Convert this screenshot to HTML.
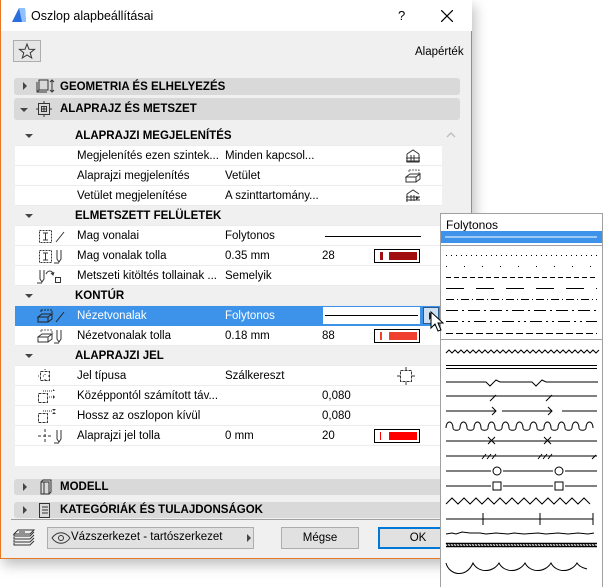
<!DOCTYPE html>
<html><head><meta charset="utf-8"><style>
*{margin:0;padding:0;box-sizing:border-box}
body{width:604px;height:587px;background:#fff;position:relative;overflow:hidden;font-family:"Liberation Sans",sans-serif;font-size:11.5px;color:#000}
.a{position:absolute}
#dlg{left:0;top:0;width:472px;height:559px;background:#f0f0f0;border:1px solid #e87722;border-top:none;box-shadow:3px 6px 12px rgba(0,0,0,.25)}
.bar{position:absolute;left:13px;width:446px;background:#d9d9d9;border-radius:3px;font-weight:bold;font-size:11.5px}
.row{position:absolute;left:14px;width:427px;height:20px;background:#fff;border-bottom:1px solid #ececec;line-height:21px}
.sub{background:#f0f0f0;font-weight:bold}
.t{position:absolute;white-space:nowrap}
.tri{position:absolute;left:10px;top:8px;width:0;height:0;border-left:4px solid transparent;border-right:4px solid transparent;border-top:4px solid #444}
.tr{position:absolute;width:0;height:0;border-top:4px solid transparent;border-bottom:4px solid transparent;border-left:4px solid #444}
.sw{position:absolute;left:359px;top:3px;width:46px;height:14px;border:1px solid #000;background:#fff}
.sw i{position:absolute;top:2px;height:8px}
.ic{position:absolute;left:22px;top:2px}
</style></head><body>
<div id="dlg" class="a">
 <div class="a" style="left:0;top:0;width:471px;height:31px;background:#fff"></div>
 <svg class="a" style="left:10px;top:7px" width="16" height="16"><path d="M1 15 L8 1 L14 1 L15 15Z" fill="#2a6fdb"/><path d="M8 1 L14 1 L15 15 L11 15Z" fill="#8fc0ff"/></svg>
 <div class="t" style="left:30px;top:9px;font-size:12.5px">Oszlop alapbeállításai</div>
 <div class="t" style="left:397px;top:8px;font-size:13px">?</div>
 <svg class="a" style="left:440px;top:10px" width="12" height="12"><path d="M0 0L12 12M12 0L0 12" stroke="#000" stroke-width="1.2"/></svg>
 <div class="a" style="left:12px;top:40px;width:28px;height:22px;border:1px solid #adadad;background:#e6e6e6"></div>
 <svg class="a" style="left:17px;top:42px" width="18" height="18"><path d="M9 2 L11 7.3 L16.5 7.4 L12.2 10.8 L13.7 16 L9 13 L4.3 16 L5.8 10.8 L1.5 7.4 L7 7.3Z" fill="none" stroke="#333" stroke-width="1"/></svg>
 <div class="t" style="left:414px;top:46px">Alapérték</div>

 <div class="bar" style="top:78px;height:17px"><div class="tr" style="left:9px;top:4px"></div>
  <svg class="a" style="left:22px;top:0" width="22" height="17"><rect x="3" y="2" width="9" height="10" fill="none" stroke="#333"/><path d="M1 4v10h10M3 12l-2 2M16 2v12M14 4l2-2 2 2M14 12l2 2 2-2" fill="none" stroke="#333"/></svg>
  <div class="t" style="left:46px;top:3px">GEOMETRIA ÉS ELHELYEZÉS</div></div>
 <div class="bar" style="top:98px;height:22px"><div class="tri" style="left:6px;top:10px"></div>
  <svg class="a" style="left:22px;top:3px" width="16" height="16"><rect x="2.5" y="2.5" width="11" height="11" fill="none" stroke="#333"/><rect x="5.5" y="5.5" width="5" height="5" fill="none" stroke="#333"/><path d="M8 6v4M6 8h4M8 0v2M8 14v2M0 8h2M14 8h2" stroke="#333"/></svg>
  <div class="t" style="left:46px;top:5px">ALAPRAJZ ÉS METSZET</div></div>

 <div class="a" style="left:441px;top:126px;width:18px;height:340px;background:#f0f0f0"></div>
 <svg class="a" style="left:445px;top:132px" width="10" height="6"><path d="M1 5L5 1L9 5" fill="none" stroke="#c0c0c0" stroke-width="1.5"/></svg>
 <div class="a" style="left:14px;top:126px;width:427px;height:340px;background:#fff"></div>

 <div class="row sub" style="top:126px"><div class="tri"></div><div class="t" style="left:60px">ALAPRAJZI MEGJELENÍTÉS</div></div>
 <div class="row" style="top:146px"><div class="t" style="left:62px">Megjelenítés ezen szintek...</div><div class="t" style="left:210px">Minden kapcsol...</div>
  <svg class="a" style="left:390px;top:2px" width="16" height="16"><path d="M2 6L8 2L14 6M2 6v8h12V6M1 10h14M1 13h14M6 7v6M9 7v6" fill="none" stroke="#333"/></svg></div>
 <div class="row" style="top:166px"><div class="t" style="left:62px">Alaprajzi megjelenítés</div><div class="t" style="left:210px">Vetület</div>
  <svg class="a" style="left:390px;top:2px" width="16" height="16"><path d="M4 2h10v5M4 2v3" fill="none" stroke="#666" stroke-dasharray="2 1"/><path d="M1 9l4-3h10l-4 3zM1 9v5h10V9M11 14l4-3V6" fill="none" stroke="#333"/></svg></div>
 <div class="row" style="top:186px"><div class="t" style="left:62px">Vetület megjelenítése</div><div class="t" style="left:210px">A szinttartomány...</div>
  <svg class="a" style="left:390px;top:2px" width="16" height="16"><path d="M2 6L8 2L14 6M2 6v8M1 9h14M1 12h14M6 7v6M9 7v6" fill="none" stroke="#333"/><path d="M11 8l3 2-3 2z" fill="#333"/></svg></div>

 <div class="row sub" style="top:206px"><div class="tri"></div><div class="t" style="left:60px">ELMETSZETT FELÜLETEK</div></div>
 <div class="row" style="top:226px"><svg class="ic" width="30" height="16"><rect x="2.5" y="2.5" width="12" height="12" fill="none" stroke="#333" stroke-dasharray="2 1"/><path d="M6 5h5M6 12h5M8.5 5v7M19 14l8-10" fill="none" stroke="#333"/></svg><div class="t" style="left:62px">Mag vonalai</div><div class="t" style="left:210px">Folytonos</div><div class="a" style="left:310px;top:10px;width:96px;height:1px;background:#000"></div></div>
 <div class="row" style="top:246px"><svg class="ic" width="30" height="16"><rect x="2.5" y="2.5" width="12" height="12" fill="none" stroke="#333" stroke-dasharray="2 1"/><path d="M6 5h5M6 12h5M8.5 5v7M20 2v9l2 3 2-3V2M17 15h5" fill="none" stroke="#333"/></svg><div class="t" style="left:62px">Mag vonalak tolla</div><div class="t" style="left:210px">0.35 mm</div><div class="t" style="left:307px">28</div><div class="sw"><i style="left:5px;width:3px;background:#a01010"></i><i style="left:14px;width:28px;background:#a01010"></i></div></div>
 <div class="row" style="top:266px"><svg class="ic" width="30" height="16"><path d="M3 2v9l2 3 2-3V2M0 15h5M9 6c2-4 6-4 7 0M14 5l2 2 1-3" fill="none" stroke="#333"/><rect x="18.5" y="9.5" width="5" height="5" fill="none" stroke="#333"/></svg><div class="t" style="left:62px">Metszeti kitöltés tollainak ...</div><div class="t" style="left:210px">Semelyik</div></div>

 <div class="row sub" style="top:286px"><div class="tri"></div><div class="t" style="left:60px">KONTÚR</div></div>
 <div class="row" style="top:306px;background:#3d93ea;color:#fff;border-bottom:none;height:20px"><svg class="ic" width="30" height="16"><path d="M4 2h11v5M4 2v3" fill="none" stroke="#222" stroke-dasharray="2 1"/><path d="M1 9l4-3h10l-4 3zM1 9v5h10V9M11 14l4-3V6M19 14l8-10" fill="none" stroke="#222"/></svg><div class="t" style="left:62px">Nézetvonalak</div><div class="t" style="left:210px">Folytonos</div>
  <div class="a" style="left:308px;top:1px;width:97px;height:17px;background:#fff"><div class="a" style="left:2px;top:8px;width:93px;height:1px;background:#000"></div></div>
  <div class="a" style="left:408px;top:1px;width:16px;height:17px;background:#cfe0f2;border:1px solid #2a5a8a"></div><div class="tr" style="left:414px;top:6px;border-left-color:#222"></div></div>
 <div class="row" style="top:326px"><svg class="ic" width="30" height="16"><path d="M4 2h11v5M4 2v3M1 9v5" fill="none" stroke="#666" stroke-dasharray="2 1"/><path d="M1 9l4-3h10l-4 3zM1 11v3h10V9M11 14l4-3V6M20 2v9l2 3 2-3V2M17 15h5" fill="none" stroke="#333"/></svg><div class="t" style="left:62px">Nézetvonalak tolla</div><div class="t" style="left:210px">0.18 mm</div><div class="t" style="left:307px">88</div><div class="sw"><i style="left:5px;width:2px;background:#f04030"></i><i style="left:14px;width:28px;background:#f04030"></i></div></div>

 <div class="row sub" style="top:346px"><div class="tri"></div><div class="t" style="left:60px">ALAPRAJZI JEL</div></div>
 <div class="row" style="top:366px"><svg class="ic" width="30" height="16"><rect x="3.5" y="3.5" width="9" height="9" fill="none" stroke="#333" stroke-dasharray="3 1"/><path d="M8 1v14M1 8h14" stroke="#333" stroke-dasharray="1 4"/></svg><div class="t" style="left:62px">Jel típusa</div><div class="t" style="left:210px">Szálkereszt</div><svg class="a" style="left:382px;top:1px" width="18" height="18"><rect x="3.5" y="3.5" width="11" height="11" fill="none" stroke="#333" stroke-dasharray="3 1"/><path d="M9 0v3M9 15v3M0 9h3M15 9h3" stroke="#333"/></svg></div>
 <div class="row" style="top:386px"><svg class="ic" width="30" height="16"><rect x="1.5" y="5.5" width="9" height="9" fill="none" stroke="#333" stroke-dasharray="3 1"/><path d="M6 3h10M12 9h6" stroke="#333" stroke-dasharray="1 1"/><path d="M16 1l2 2-2 0zM16 7l2 2-2 2z" fill="#333"/></svg><div class="t" style="left:62px">Középpontól számított táv...</div><div class="t" style="left:307px">0,080</div></div>
 <div class="row" style="top:406px"><svg class="ic" width="30" height="16"><rect x="1.5" y="5.5" width="9" height="9" fill="none" stroke="#333" stroke-dasharray="3 1"/><path d="M6 3h10" stroke="#333" stroke-dasharray="1 1"/><path d="M15 1h4l-2 2zM15 6h4l-2-2z" fill="#333"/></svg><div class="t" style="left:62px">Hossz az oszlopon kívül</div><div class="t" style="left:307px">0,080</div></div>
 <div class="row" style="top:426px"><svg class="ic" width="30" height="16"><path d="M8 1v14M1 8h14" stroke="#333" stroke-dasharray="3 2"/><path d="M20 2v9l2 3 2-3V2M17 15h5" fill="none" stroke="#333"/></svg><div class="t" style="left:62px">Alaprajzi jel tolla</div><div class="t" style="left:210px">0 mm</div><div class="t" style="left:307px">20</div><div class="sw"><i style="left:5px;width:1px;background:#f00"></i><i style="left:14px;width:28px;background:#f00"></i></div></div>

 <div class="bar" style="top:479px;height:16px"><div class="tr" style="left:9px;top:4px"></div>
  <svg class="a" style="left:24px;top:0" width="14" height="16"><path d="M3 3h8v12H3zM3 3l2-2h8v12l-2 2M6 3v12" fill="none" stroke="#333"/></svg>
  <div class="t" style="left:46px;top:2px">MODELL</div></div>
 <div class="bar" style="top:502px;height:16px"><div class="tr" style="left:9px;top:4px"></div>
  <svg class="a" style="left:24px;top:1px" width="14" height="15"><path d="M1.5 .5h10v14h-10zM4 4h6M4 7h6M4 10h6" fill="none" stroke="#333"/></svg>
  <div class="t" style="left:46px;top:2px">KATEGÓRIÁK ÉS TULAJDONSÁGOK</div></div>
 <div class="a" style="left:10px;top:519px;width:452px;height:1px;background:#a0a0a0"></div>

 <svg class="a" style="left:10px;top:528px" width="26" height="20"><path d="M7 2h16l-4 4H3zM3 6v2h16l4-4M3 9v2h16l4-4M3 12v2h16l4-4M3 15v2h16l4-4" fill="none" stroke="#333"/><path d="M8 4h6" stroke="#333"/></svg>
 <div class="a" style="left:46px;top:527px;width:207px;height:22px;border:1px solid #adadad;background:#e1e1e1"></div>
 <svg class="a" style="left:50px;top:532px" width="20" height="12"><path d="M1 6c5-7 13-7 18 0c-5 7-13 7-18 0z" fill="none" stroke="#333"/><circle cx="10" cy="6" r="2.5" fill="none" stroke="#333"/></svg>
 <div class="t" style="left:70px;top:531px">Vázszerkezet - tartószerkezet</div>
 <div class="tr" style="left:246px;top:534px"></div>
 <div class="a" style="left:280px;top:527px;width:78px;height:22px;border:1px solid #adadad;background:#e1e1e1;text-align:center;line-height:21px">Mégse</div>
 <div class="a" style="left:377px;top:527px;width:80px;height:22px;border:2px solid #0078d7;background:#e1e1e1;text-align:center;line-height:19px">OK</div>
</div>

<div class="a" style="left:440px;top:213px;width:163px;height:374px;background:#fff;border:1px solid #a0a0a0;border-bottom:none">
 <div class="t" style="left:5px;top:4px;font-size:12px">Folytonos</div>
</div>
<svg class="a" style="left:440px;top:213px" width="164" height="374">
 <rect x="1" y="18" width="161" height="12" fill="#3d93ea"/>
 <line x1="5" y1="24" x2="157" y2="24" stroke="#fff"/>
 <line x1="1" y1="32.5" x2="162" y2="32.5" stroke="#a0a0a0"/>
 <g stroke="#000" stroke-width="1">
  <line x1="6" y1="42.5" x2="157" y2="42.5" stroke-dasharray="1 4"/>
  <line x1="6" y1="53.5" x2="157" y2="53.5" stroke-dasharray="1 17"/>
  <line x1="6" y1="64.5" x2="157" y2="64.5" stroke-dasharray="5 3"/>
  <line x1="6" y1="75.5" x2="157" y2="75.5" stroke-dasharray="18 12"/>
  <line x1="6" y1="86.5" x2="157" y2="86.5" stroke-dasharray="8 3 1 3"/>
  <line x1="6" y1="97.5" x2="157" y2="97.5" stroke-dasharray="12 4 2 4"/>
  <line x1="6" y1="108.5" x2="157" y2="108.5" stroke-dasharray="12 4 2 4 2 4"/>
  <line x1="6" y1="120.5" x2="157" y2="120.5" stroke-dasharray="7 3"/>
 </g>
 <line x1="1" y1="126.5" x2="162" y2="126.5" stroke="#a0a0a0"/>
 <g fill="none" stroke="#000" stroke-width="1">
  <path d="M6 140 l3 -3 l3 3 l3 -3 l3 3 l3 -3 l3 3 l3 -3 l3 3 l3 -3 l3 3 l3 -3 l3 3 l3 -3 l3 3 l3 -3 l3 3 l3 -3 l3 3 l3 -3 l3 3 l3 -3 l3 3 l3 -3 l3 3 l3 -3 l3 3 l3 -3 l3 3 l3 -3 l3 3 l3 -3 l3 3 l3 -3 l3 3 l3 -3 l3 3 l3 -3 l3 3 l3 -3 l3 3 l3 -3 l3 3 l3 -3 l3 3 l3 -3 l3 3 l3 -3 l3 3 l3 -3 l3 3 l3 -3"/>
  <path d="M6 152.5h151M6 155.5h151"/>
  <path d="M6 169h40l4 4l6-6l4 2h32l4 4l6-6l4 2h52"/>
  <path d="M6 183h151M50 188l6-6M106 188l6-6"/>
  <path d="M6 198h50M52 194l4 4l-4 4M62 198h50M108 194l4 4l-4 4M122 198h35"/>
  <path d="M6 215 c0-8 7-8 7 0 c0 3 7 3 7 0 c0-8 7-8 7 0 c0 3 7 3 7 0 c0-8 7-8 7 0 c0 3 7 3 7 0 c0-8 7-8 7 0 c0 3 7 3 7 0 c0-8 7-8 7 0 c0 3 7 3 7 0 c0-8 7-8 7 0 c0 3 7 3 7 0 c0-8 7-8 7 0 c0 3 7 3 7 0 c0-8 7-8 7 0 c0 3 7 3 7 0 c0-8 7-8 7 0 c0 3 7 3 7 0 c0-8 7-8 7 0 c0 3 7 3 7 0 c0-8 7-8 7 0"/>
  <path d="M6 228h151M48 224l7 7M55 224l-7 7M104 224l7 7M111 224l-7 7"/>
  <path d="M6 243h151M42 246l4-5M47 246l4-5M52 246l4-5M98 246l4-5M103 246l4-5M108 246l4-5M152 246l4-4"/>
  <path d="M6 258h45M63 258h50M125 258h32"/><circle cx="57" cy="258" r="4"/><circle cx="119" cy="258" r="4"/>
  <path d="M6 273h45M63 273h50M125 273h32"/><rect x="53" y="269" width="8" height="8"/><rect x="115" y="269" width="8" height="8"/>
  <path d="M6 291 l6 -6 l6 6 l6 -6 l6 6 l6 -6 l6 6 l6 -6 l6 6 l6 -6 l6 6 l6 -6 l6 6 l6 -6 l6 6 l6 -6 l6 6 l6 -6 l6 6 l6 -6 l6 6 l6 -6 l6 6 l6 -6 l6 6"/>
  <path d="M6 306h40M43 300v12M40 306h60M100 300v12M98 306h55M153 300v12"/>
  <path d="M6 321l6-1l4 1l6-2l8 1h10l6 1l10-1l12 1l6-1l10 1l14-1l8 1l12-1l10 1l10-1l10 1l6-1"/>
  <path d="M6 330.5h151M6 333.5h151" stroke-width="1.5"/>
  <path d="M6 330 l3 4 M9 330 l3 4M12 330 l3 4M15 330 l3 4M18 330 l3 4M21 330 l3 4M24 330 l3 4M27 330 l3 4M30 330 l3 4M33 330 l3 4M36 330 l3 4M39 330 l3 4M42 330 l3 4M45 330 l3 4M48 330 l3 4M51 330 l3 4M54 330 l3 4M57 330 l3 4M60 330 l3 4M63 330 l3 4M66 330 l3 4M69 330 l3 4M72 330 l3 4M75 330 l3 4M78 330 l3 4M81 330 l3 4M84 330 l3 4M87 330 l3 4M90 330 l3 4M93 330 l3 4M96 330 l3 4M99 330 l3 4M102 330 l3 4M105 330 l3 4M108 330 l3 4M111 330 l3 4M114 330 l3 4M117 330 l3 4M120 330 l3 4M123 330 l3 4M126 330 l3 4M129 330 l3 4M132 330 l3 4M135 330 l3 4M138 330 l3 4M141 330 l3 4M144 330 l3 4M147 330 l3 4M150 330 l3 4M153 330 l3 4"/>
  <path d="M6 350 c3 12 20 16 27 0 c5 10 20 10 26 0 c5 10 20 10 26 0 c5 10 20 10 26 0 c5 10 20 10 26 0 c3 5 8 5 10 6"/>
 </g>
</svg>
<svg class="a" style="left:430px;top:311px" width="14" height="22"><path d="M1 1v16l4-4l3 7l3-1l-3-7h5z" fill="#fff" stroke="#000"/></svg>
</body></html>
